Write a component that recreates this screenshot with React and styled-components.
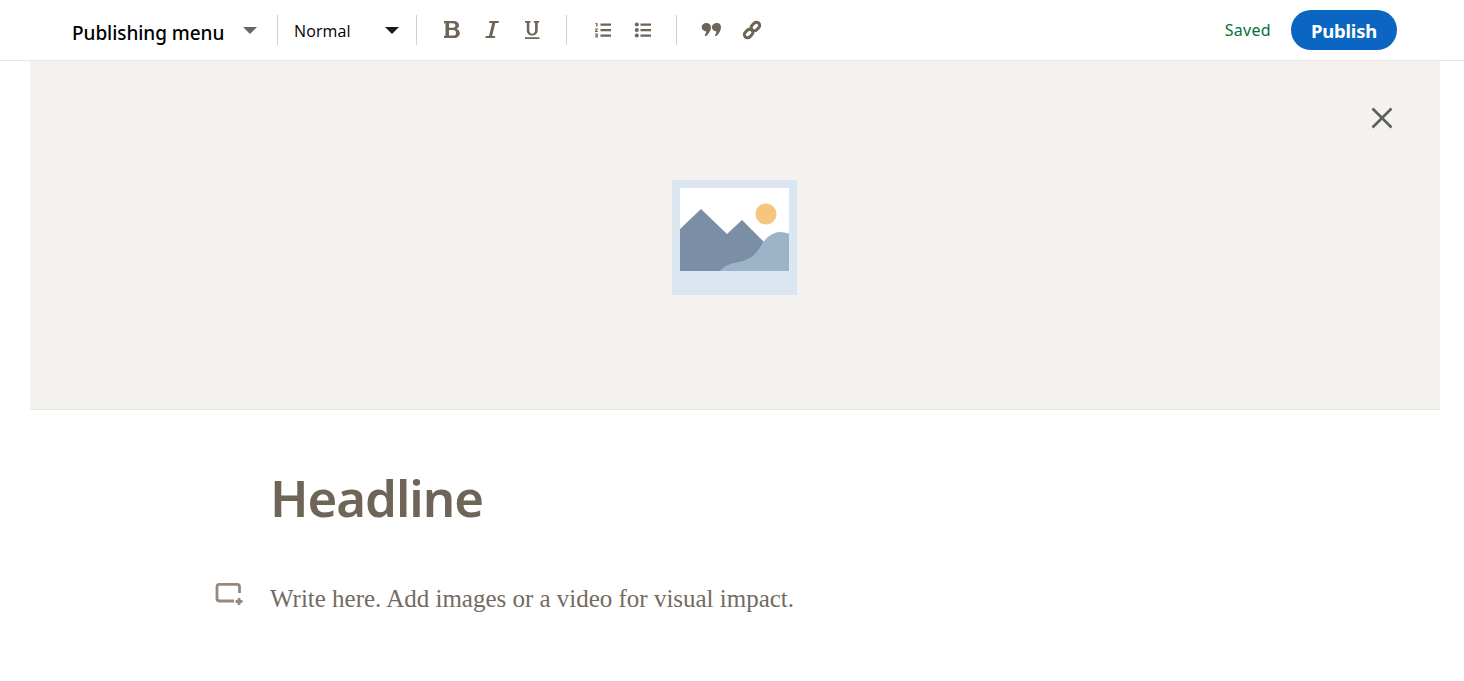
import React from 'react';
import styled, { createGlobalStyle } from 'styled-components';

const Global = createGlobalStyle`
  html, body { margin: 0; padding: 0; background: #fff; }
  body { font-family: "Noto Sans", "Open Sans", sans-serif; overflow: hidden; }
`;

const Page = styled.div`
  width: 1464px;
  height: 681px;
  display: flex;
  flex-direction: column;
`;

const Toolbar = styled.header`
  height: 60px;
  flex: none;
  display: flex;
  align-items: center;
  border-bottom: 1px solid #e9e7e3;
  padding: 0 67px 0 72px;
`;

const MenuButton = styled.button`
  display: flex;
  align-items: center;
  width: 205px;
  height: 30px;
  padding: 0 20px 0 0;
  box-sizing: border-box;
  border: 0;
  background: none;
  font: 500 19px/30px "Noto Sans", sans-serif;
  letter-spacing: -0.06px;
  color: #000;
  position: relative;
  top: 3px;
`;

const Caret = styled.span`
  width: 0;
  height: 0;
  border-left: 7px solid transparent;
  border-right: 7px solid transparent;
  border-top: 7px solid ${p => p.$color};
  margin-left: auto;
  position: relative;
  top: ${p => p.$top}px;
`;

const Divider = styled.span`
  width: 1px;
  height: 30px;
  flex: none;
  background: #d8cfc4;
`;

const StyleSelect = styled.button`
  display: flex;
  align-items: center;
  width: 122px;
  height: 30px;
  margin-left: 16px;
  padding: 2px 17px 0 0;
  box-sizing: border-box;
  border: 0;
  background: none;
  font: 400 16px/28px "Open Sans", sans-serif;
  letter-spacing: 0.12px;
  color: #000;
`;

const IconGroup = styled.div`
  display: flex;
  align-items: center;
  gap: ${p => p.$gap}px;
  padding: ${p => p.$padding};
`;

const IconSlot = styled.span`
  display: block;
  width: 20px;
  height: 20px;
  color: #6e6457;
  svg { display: block; }
`;

const Spacer = styled.div`
  flex: 1;
`;

const Saved = styled.span`
  font: 400 16px/24px "Noto Sans", sans-serif;
  letter-spacing: 0.3px;
  color: #06703a;
  margin-right: 20px;
`;

const PublishButton = styled.button`
  width: 106px;
  height: 40px;
  padding: 2px 0 0;
  border: 0;
  border-radius: 20px;
  background: #0a66c2;
  color: #fff;
  font: 700 18.500px/38px "Noto Sans", sans-serif;
  letter-spacing: -0.2px;
`;

const Banner = styled.section`
  flex: none;
  height: 229px;
  margin: 0 24px 0 30px;
  padding-top: 119px;
  background: #f3f2ef;
  border-bottom: 1px solid #e9e7e3;
  position: relative;
  display: flex;
  justify-content: center;
`;

const CloseButton = styled.button`
  position: absolute;
  top: 45px;
  right: 46px;
  width: 24px;
  height: 24px;
  padding: 0;
  border: 0;
  background: none;
  color: #5e5e5e;
  svg { display: block; }
`;

const Placeholder = styled.svg`
  display: block;
  width: 125px;
  height: 115px;
  position: relative;
  left: -1px;
`;

const Article = styled.main`
  padding: 51px 0 0 270px;
`;

const Headline = styled.h1`
  margin: 0;
  font: 600 51px/72px "Noto Sans", sans-serif;
  letter-spacing: -1.05px;
  color: #6e6457;
`;

const BodyRow = styled.div`
  margin-top: 50px;
  position: relative;
`;

const AddButton = styled.button`
  position: absolute;
  left: -55px;
  top: 0;
  width: 28px;
  height: 24px;
  padding: 0;
  border: 0;
  background: none;
  svg { display: block; }
`;

const BodyText = styled.p`
  margin: 0;
  font: 400 25px/32px "Liberation Serif", serif;
  letter-spacing: -0.01px;
  color: #736b61;
`;

const Icon = ({ children }) => (
  <IconSlot>
    <svg width="20" height="20" viewBox="0 0 20 20" fill="currentColor">{children}</svg>
  </IconSlot>
);

export default function App() {
  return (
    <Page>
      <Global />
      <Toolbar>
        <MenuButton>
          Publishing menu
          <Caret $color="#666" $top={-3} />
        </MenuButton>
        <Divider />
        <StyleSelect>
          Normal
          <Caret $color="#1a1a1a" $top={-1} />
        </StyleSelect>
        <Divider />
        <IconGroup $gap={20} $padding="0 24px 0 25px">
          <Icon>
            <path fillRule="evenodd" d="M2 1h9.500c3.500 0 5.500 1.700 5.500 4.300 0 1.800-1 3-2.600 3.600 2.100.5 3.400 2 3.400 4.100 0 2.900-2.200 5-5.800 5H2v-2.300h1.500V3.300H2V1zm5 2.300v4.500h3.900c1.600 0 2.500-.8 2.500-2.200s-.9-2.300-2.500-2.300H7zm0 6.800v5.500h4.200c1.800 0 2.800-1 2.800-2.700 0-1.800-1-2.800-2.800-2.800H7z" />
          </Icon>
          <Icon>
            <path d="M7.500 1h9.500l-.5 2H13.300L10.100 16h3.200l-.5 2H3.300l.5-2H7L10.200 3H7z" />
          </Icon>
          <Icon>
            <path d="M3 1h5.500v1.800H7.300V10c0 2.300 1 3.700 2.900 3.700s2.900-1.400 2.900-3.700V2.800h-1.200V1h5.200v1.800h-1.400V10c0 3.400-2.100 5.500-5.500 5.500S4.800 13.400 4.800 10V2.800H3zM3 17.300h14.400V19H3z" />
          </Icon>
        </IconGroup>
        <Divider />
        <IconGroup $gap={20} $padding="0 23px 0 26px">
          <Icon>
            <path d="M7.500 3.500H18v2.200H7.500zM7.500 9H18v2.200H7.500zM7.500 14.500H18v2.200H7.500zM2.500 3h2v3.800H3.300V4.200H2.500zM2 8.500h2.800v1L3.500 11h1.300v1H2v-1l1.500-1.600H2zM2 13.500h2.800v4H2v-1h1.600v-.5h-1v-.9h1v-.6H2z" />
          </Icon>
          <Icon>
            <circle cx="3.800" cy="4.600" r="2" />
            <circle cx="3.800" cy="10.100" r="2" />
            <circle cx="3.800" cy="15.600" r="2" />
            <path d="M7.500 3.500H18v2.200H7.500zM7.500 9H18v2.200H7.500zM7.500 14.500H18v2.200H7.500z" />
          </Icon>
        </IconGroup>
        <Divider />
        <IconGroup $gap={21} $padding="0 0 0 24px">
          <Icon>
            <path d="M5.300 3C8 3 10 4.800 10 7.300c0 3.500-2.200 6.200-5 9-.6-.2-1.100-.6-1.300-1.100.8-1 1.400-2.200 1.600-3.700C2.600 11.300.7 9.500.7 7.300.7 4.800 2.700 3 5.300 3zM16 3c2.600 0 4 1.800 4 4.300 0 3.500-2 6.200-4.800 9-.6-.2-1.100-.6-1.300-1.100.8-1 1.400-2.200 1.600-3.700-2.700-.2-4.600-2-4.600-4.200C10.900 4.800 13.400 3 16 3z" />
          </Icon>
          <Icon>
            <g fill="none" stroke="currentColor" strokeWidth="3">
              <rect x="10.200" y="1.800" width="6.400" height="9.400" rx="3.200" transform="rotate(45 13.400 6.500)" />
              <rect x="3.400" y="8.800" width="6.400" height="9.400" rx="3.200" transform="rotate(45 6.600 13.500)" />
            </g>
          </Icon>
        </IconGroup>
        <Spacer />
        <Saved>Saved</Saved>
        <PublishButton>Publish</PublishButton>
      </Toolbar>
      <Banner>
        <Placeholder viewBox="0 0 125 115">
          <rect width="125" height="115" fill="#dce6f1" />
          <rect x="8" y="8" width="109" height="83" fill="#fff" />
          <circle cx="94" cy="34" r="10.500" fill="#f5c67d" />
          <path d="M8 49 L29 29 L55 54 L70 40 L92 62 L117 91 H8 Z" fill="#7a8fa6" />
          <path d="M48 91c5-6 12-8 19-9 12-2 18-9 23-18 5-8 12-12 18-12 3 0 6 .5 9 1.500V91z" fill="#9db3c8" />
        </Placeholder>
        <CloseButton aria-label="Close">
          <svg width="24" height="24" viewBox="0 0 24 24" fill="none" stroke="currentColor" strokeWidth="2.600">
            <path d="M2.500 2.500l19 19M21.500 2.500l-19 19" />
          </svg>
        </CloseButton>
      </Banner>
      <Article>
        <Headline>Headline</Headline>
        <BodyRow>
          <AddButton aria-label="Add media">
            <svg width="28" height="24" viewBox="0 0 28 24" fill="none" stroke="#94897b" strokeWidth="2.800">
              <path d="M24.500 10V3.500A2.500 2.500 0 0 0 22 1.400H4.500A2.500 2.500 0 0 0 2 3.500v12A2.500 2.500 0 0 0 4.500 18H19" />
              <path d="M24 15v7M20.500 18.500h7" />
            </svg>
          </AddButton>
          <BodyText>Write here. Add images or a video for visual impact.</BodyText>
        </BodyRow>
      </Article>
    </Page>
  );
}
